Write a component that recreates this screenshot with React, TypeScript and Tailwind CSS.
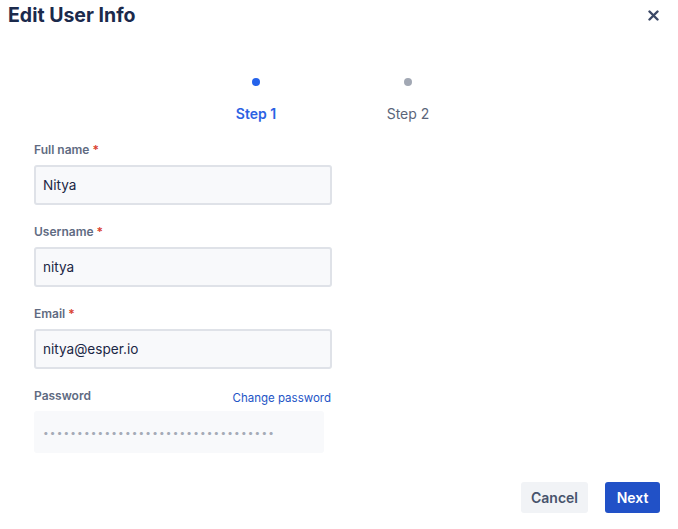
import React from "react";

const Label = ({ text, required }: { text: string; required?: boolean }) => (
  <div className="h-[16px] text-[12px] leading-[16px] font-semibold text-[#5f6b82]">
    {text}
    {required && <span className="text-[#d9412f] ml-[3px]">*</span>}
  </div>
);

const Field = ({ label, value }: { label: string; value: string }) => (
  <div className="flex flex-col">
    <Label text={label} required />
    <div className="mt-[7px] h-[40px] w-[298px] rounded-[3px] border-2 border-[#dfe2e8] bg-[#f8f9fb] flex items-center px-[7px] text-[13.6px] text-[#1b2745]">
      {value}
    </div>
  </div>
);

export default function App() {
  return (
    <div
      className="w-[678px] h-[529px] bg-white flex flex-col"
      style={{ fontFamily: "Inter, 'Noto Sans', sans-serif" }}
    >
      <div className="flex items-center justify-between h-[31px] pl-[8px] pr-[19px]">
        <div className="text-[19.5px] font-bold text-[#1b2a4c]">Edit User Info</div>
        <svg width="11" height="11" viewBox="0 0 11 11">
          <path d="M1.5 1.5 L9.5 9.5 M9.5 1.5 L1.5 9.5" stroke="#3b4866" strokeWidth="2.4" strokeLinecap="round" />
        </svg>
      </div>

      <div className="flex pl-[180px] mt-[47px]">
        <div className="w-[152px] flex flex-col items-center">
          <div className="w-[8px] h-[8px] rounded-full bg-[#2563eb]" />
          <div className="mt-[20px] text-[14px] leading-[16px] font-semibold text-[#2b62e3]">Step 1</div>
        </div>
        <div className="w-[152px] flex flex-col items-center">
          <div className="w-[8px] h-[8px] rounded-full bg-[#a2a8b4]" />
          <div className="mt-[20px] text-[14px] leading-[16px] text-[#5b6579]">Step 2</div>
        </div>
      </div>

      <div className="pl-[34px] mt-[20px] flex flex-col gap-[19px]">
        <Field label="Full name" value="Nitya" />
        <Field label="Username" value="nitya" />
        <Field label="Email" value="nitya@esper.io" />
        <div className="flex flex-col w-[298px]">
          <div className="flex items-start justify-between h-[16px]">
            <Label text="Password" />
            <div className="text-[11.5px] leading-[20px] text-[#2354c6] mr-[1px]">Change password</div>
          </div>
          <div className="mt-[7px] h-[42px] w-[290px] rounded-[3px] bg-[#f8f9fb] flex items-center px-[9px] text-[10px] tracking-[1.2px] text-[#a5abb7]">
            ••••••••••••••••••••••••••••••••••
          </div>
        </div>
      </div>

      <div className="mt-auto flex justify-end gap-[17px] pr-[18px] pb-[16px]">
        <button className="w-[67px] h-[31px] rounded-[3px] bg-[#f1f3f6] text-[14px] font-semibold text-[#47536c]">
          Cancel
        </button>
        <button className="w-[55px] h-[31px] rounded-[3px] bg-[#2151c7] text-[14px] font-semibold text-white">
          Next
        </button>
      </div>
    </div>
  );
}
